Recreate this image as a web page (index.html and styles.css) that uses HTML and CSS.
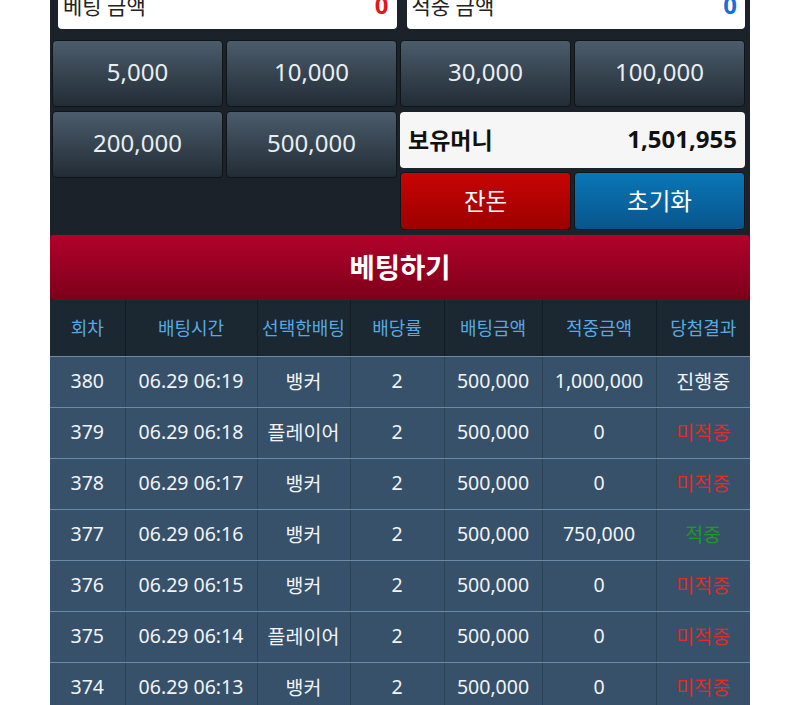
FILE: index.html
```html
<!DOCTYPE html>
<html lang="ko">
<head>
    <meta charset="UTF-8">
    <meta name="viewport" content="width=device-width, initial-scale=1.0">
    <title>베팅</title>
    <link rel="stylesheet" href="styles.css">
</head>
<body>
    <div class="container">
        <div class="amount-row">
            <div class="amount-box left">
                <span>베팅 금액</span>
                <strong class="red">0</strong>
            </div>
            <div class="amount-box right">
                <span>적중 금액</span>
                <strong class="blue">0</strong>
            </div>
        </div>

        <div class="control-area">
            <div class="half">
                <div class="chip-grid">
                    <button class="chip">5,000</button>
                    <button class="chip">10,000</button>
                    <button class="chip">200,000</button>
                    <button class="chip">500,000</button>
                </div>
            </div>
            <div class="half">
                <div class="chip-grid single">
                    <button class="chip">30,000</button>
                    <button class="chip">100,000</button>
                </div>
                <div class="money-box">
                    <span class="money-label">보유머니</span>
                    <span class="money-value">1,501,955</span>
                </div>
                <div class="chip-grid action">
                    <button class="action-btn change">잔돈</button>
                    <button class="action-btn reset">초기화</button>
                </div>
            </div>
        </div>

        <button class="bet-button">베팅하기</button>

        <table class="history">
            <colgroup>
                <col style="width: 75px">
                <col style="width: 132px">
                <col style="width: 93px">
                <col style="width: 94px">
                <col style="width: 98px">
                <col style="width: 114px">
                <col style="width: 94px">
            </colgroup>
            <thead>
                <tr>
                    <th>회차</th>
                    <th>배팅시간</th>
                    <th>선택한배팅</th>
                    <th>배당률</th>
                    <th>배팅금액</th>
                    <th>적중금액</th>
                    <th>당첨결과</th>
                </tr>
            </thead>
            <tbody>
                <tr><td>380</td><td>06.29 06:19</td><td>뱅커</td><td>2</td><td>500,000</td><td>1,000,000</td><td>진행중</td></tr>
                <tr><td>379</td><td>06.29 06:18</td><td>플레이어</td><td>2</td><td>500,000</td><td>0</td><td class="lose">미적중</td></tr>
                <tr><td>378</td><td>06.29 06:17</td><td>뱅커</td><td>2</td><td>500,000</td><td>0</td><td class="lose">미적중</td></tr>
                <tr><td>377</td><td>06.29 06:16</td><td>뱅커</td><td>2</td><td>500,000</td><td>750,000</td><td class="win">적중</td></tr>
                <tr><td>376</td><td>06.29 06:15</td><td>뱅커</td><td>2</td><td>500,000</td><td>0</td><td class="lose">미적중</td></tr>
                <tr><td>375</td><td>06.29 06:14</td><td>플레이어</td><td>2</td><td>500,000</td><td>0</td><td class="lose">미적중</td></tr>
                <tr><td>374</td><td>06.29 06:13</td><td>뱅커</td><td>2</td><td>500,000</td><td>0</td><td class="lose">미적중</td></tr>
            </tbody>
        </table>
    </div>
</body>
</html>
```

FILE: styles.css
```css
body {
    font-family: "Noto Sans", "Noto Sans CJK KR", sans-serif;
    margin: 0;
    padding: 0;
    background-color: #ffffff;
}

.container {
    width: 700px;
    margin: -20px auto 0;
    background-color: #1c2229;
}

.amount-row {
    display: flex;
    gap: 10px;
    padding: 0 5px 0 8px;
}

.amount-box {
    flex: 1;
    height: 49px;
    background-color: #ffffff;
    border-radius: 0 0 4px 4px;
    display: flex;
    align-items: center;
    justify-content: space-between;
    padding: 0 8px 0 5px;
    box-sizing: border-box;
    font-size: 21px;
    color: #222;
}

.amount-box strong {
    font-size: 24px;
}

.red {
    color: #e3171b;
}

.blue {
    color: #1a6fd6;
}

.control-area {
    display: flex;
    gap: 3px;
    padding: 11px 5px 0 2px;
}

.half {
    flex: 1;
    display: flex;
    flex-direction: column;
}

.chip-grid {
    display: grid;
    grid-template-columns: 1fr 1fr;
    grid-auto-rows: 67px;
    gap: 4px 3px;
}

.chip-grid.action {
    grid-auto-rows: 58px;
    margin-top: 4px;
}

.chip {
    font-family: inherit;
    font-size: 24px;
    color: #e9eef1;
    background: linear-gradient(#4b5c6c, #222c35);
    border: 1px solid #10151a;
    border-radius: 4px;
    padding: 0 0 5px;
}

.money-box {
    height: 56px;
    margin-top: 5px;
    background-color: #f6f6f6;
    border-radius: 4px;
    display: flex;
    align-items: center;
    justify-content: space-between;
    padding: 0 8px 3px 8px;
    box-sizing: border-box;
    font-weight: bold;
    color: #111;
}

.money-label {
    font-size: 23px;
}

.money-value {
    font-size: 24px;
}

.action-btn {
    font-family: inherit;
    font-size: 23.5px;
    color: #ffffff;
    border: 1px solid #10151a;
    border-radius: 4px;
    padding: 0 0 3px;
}

.action-btn.change {
    background: linear-gradient(#c80404, #9c0000);
}

.action-btn.reset {
    background: linear-gradient(#0a76b6, #08558c);
}

.bet-button {
    display: block;
    width: 100%;
    height: 65px;
    margin-top: 5px;
    padding: 0 0 3px;
    font-family: inherit;
    font-size: 27.5px;
    font-weight: bold;
    color: #ffffff;
    background: linear-gradient(#b2022c, #7c0019);
    border: none;
    border-radius: 4px;
}

.history {
    width: 100%;
    border-collapse: collapse;
    table-layout: fixed;
}

.history th {
    height: 53px;
    background-color: #1b2731;
    color: #57a9e2;
    font-size: 18px;
    font-weight: normal;
    border-left: 1px solid #141c23;
    border-bottom: 1px solid #6a8aa6;
    padding: 0 0 3px;
    white-space: nowrap;
}

.history td {
    height: 47px;
    background-color: #37516a;
    color: #f2f4f6;
    font-size: 19.5px;
    text-align: center;
    border-left: 1px solid #2c4257;
    border-bottom: 1px solid #6a8aa6;
    padding: 0 0 3px;
    white-space: nowrap;
}

.history th:first-child,
.history td:first-child {
    border-left: none;
}

.history td.lose {
    color: #e12a2a;
}

.history td.win {
    color: #1d9a24;
}
```
